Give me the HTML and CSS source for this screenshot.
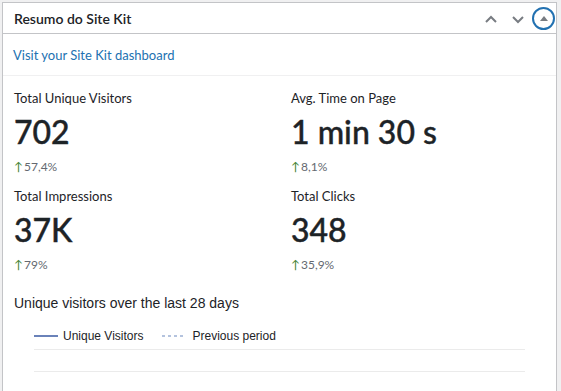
FILE: index.html
```html
<html>

<head>
  <link rel="stylesheet" href="styles.css">
</head>

<body>

  <div class="postbox">
    <div class="postbox-header">
      <h2 class="hndle">Resumo do Site Kit</h2>
      <div class="handle-actions">
        <button class="handle-btn" aria-label="Move up">
          <svg width="14" height="14" viewBox="0 0 14 14"><path d="M2 10 L7 5 L12 10" fill="none" stroke="#787c82" stroke-width="2"/></svg>
        </button>
        <button class="handle-btn" aria-label="Move down">
          <svg width="14" height="14" viewBox="0 0 14 14"><path d="M2 5 L7 10 L12 5" fill="none" stroke="#787c82" stroke-width="2"/></svg>
        </button>
        <button class="handle-btn toggle" aria-label="Toggle panel">
          <svg width="10" height="8" viewBox="0 0 10 8"><path d="M1 7 L5 2 L9 7 Z" fill="#787c82"/></svg>
        </button>
      </div>
    </div>

    <div class="inside">
      <div class="dashboard-link">
        <a href="#">Visit your Site Kit dashboard</a>
      </div>

      <div class="stats">
        <div class="stat">
          <p class="stat-label">Total Unique Visitors</p>
          <p class="stat-value">702</p>
          <p class="stat-change"><span class="arrow">&#8593;</span>57,4%</p>
        </div>
        <div class="stat">
          <p class="stat-label">Avg. Time on Page</p>
          <p class="stat-value">1 min 30 s</p>
          <p class="stat-change"><span class="arrow">&#8593;</span>8,1%</p>
        </div>
        <div class="stat">
          <p class="stat-label">Total Impressions</p>
          <p class="stat-value">37K</p>
          <p class="stat-change"><span class="arrow">&#8593;</span>79%</p>
        </div>
        <div class="stat">
          <p class="stat-label">Total Clicks</p>
          <p class="stat-value">348</p>
          <p class="stat-change"><span class="arrow">&#8593;</span>35,9%</p>
        </div>
      </div>

      <div class="chart">
        <h3 class="chart-title">Unique visitors over the last 28 days</h3>
        <div class="legend">
          <span class="legend-item"><span class="swatch solid"></span>Unique Visitors</span>
          <span class="legend-item"><span class="swatch dashed"></span>Previous period</span>
        </div>
        <div class="gridline"></div>
        <div class="gridline"></div>
      </div>
    </div>
  </div>

</body>

</html>
```

FILE: styles.css
```css
body {
  margin: 0;
  background-color: #f0f0f1;
  font-family: Lato, "Noto Sans", sans-serif;
  color: #1d2327;
}

.postbox {
  margin: 2px 0 0 2px;
  width: 555px;
  height: 420px;
  box-sizing: border-box;
  background-color: #fff;
  border: 1px solid #c3c4c7;
}

.postbox-header {
  display: flex;
  align-items: center;
  justify-content: space-between;
  height: 30px;
  border-bottom: 1px solid #c3c4c7;
}

.hndle {
  margin: 0 0 0 11px;
  font-size: 14px;
  font-weight: 600;
}

.handle-actions {
  display: flex;
  align-items: center;
  margin-right: 1px;
}

.handle-btn {
  display: flex;
  align-items: center;
  justify-content: center;
  width: 27px;
  height: 27px;
  padding: 0;
  border: none;
  background: none;
}

.handle-btn svg {
  margin-top: 2px;
}

.handle-btn.toggle {
  width: 23px;
  height: 23px;
  margin-left: 1px;
  border: 2px solid #2271b1;
  border-radius: 50%;
}

.handle-btn.toggle svg {
  margin-top: 0;
}

.dashboard-link {
  height: 41px;
  padding-left: 10px;
  display: flex;
  align-items: center;
  border-bottom: 1px solid #f0f0f1;
}

.dashboard-link a {
  font-size: 13px;
  color: #2271b1;
  text-decoration: none;
}

.stats {
  display: grid;
  grid-template-columns: 277px 277px;
  row-gap: 12px;
  padding: 13px 0 0 11px;
}

.stat p {
  margin: 0;
}

.stat-label {
  font-size: 13px;
  line-height: 18px;
}

.stat-value {
  margin-top: 5px !important;
  font-size: 32px;
  font-weight: 500;
  line-height: 40px;
  color: #1d2327;
  -webkit-text-stroke: 0.4px #1d2327;
}

.stat-change {
  margin-top: 7px !important;
  font-size: 12px;
  line-height: 16px;
  color: #646970;
}

.arrow {
  color: #3f7f2f;
  margin-right: 1px;
}

.chart {
  padding: 20px 0 0 11px;
}

.chart-title {
  margin: 0;
  font-family: "Liberation Sans", Arial, sans-serif;
  font-size: 14px;
  font-weight: normal;
  line-height: 20px;
}

.legend {
  display: flex;
  gap: 19px;
  margin: 15px 0 0 20px;
  font-family: "Liberation Sans", Arial, sans-serif;
  font-size: 12px;
  line-height: 16px;
}

.legend-item {
  display: flex;
  align-items: center;
}

.swatch {
  display: inline-block;
  width: 24px;
  height: 2px;
  margin-right: 5px;
}

.swatch.solid {
  background-color: #6a82b9;
}

.swatch.dashed {
  width: 22px;
  margin-right: 8px;
  background: repeating-linear-gradient(to right, #b4c3de 0 3px, transparent 3px 6px);
}

.gridline {
  margin: 5px 0 0 20px;
  width: 491px;
  border-top: 1px solid #ebebeb;
}

.gridline + .gridline {
  margin-top: 21px;
}
```
